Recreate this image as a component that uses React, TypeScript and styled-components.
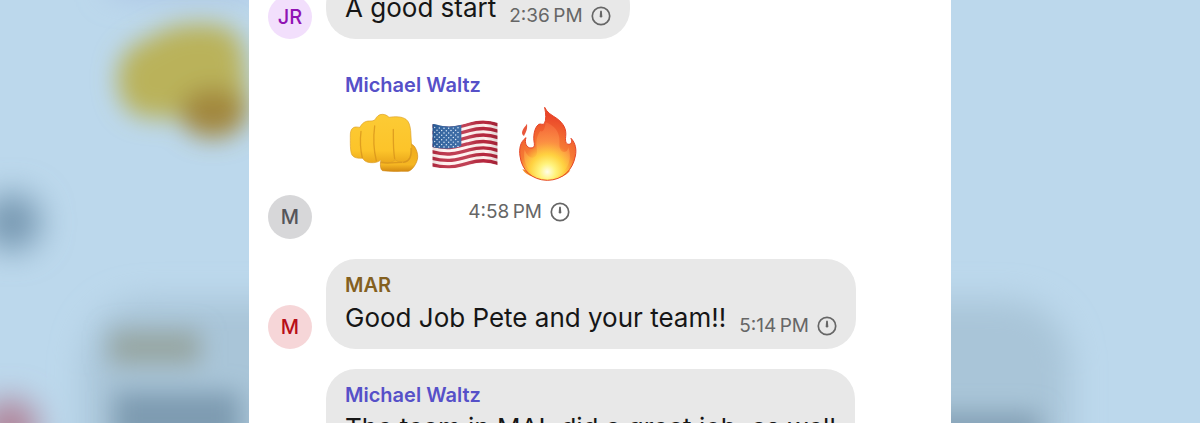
import React from "react";
import styled, { createGlobalStyle } from "styled-components";

const GlobalStyle = createGlobalStyle`
  * { box-sizing: border-box; }
  body {
    margin: 0;
    font-family: Inter, "Liberation Sans", sans-serif;
    background: #bcd8ec;
  }
`;

const Page = styled.div`
  position: relative;
  display: grid;
  grid-template-columns: minmax(0, 1fr) minmax(0, 702px) minmax(0, 1fr);
  height: 100vh;
  overflow: hidden;
`;

const Backdrop = styled.svg`
  position: absolute;
  inset: 0;
  width: 100%;
  height: 100%;
`;

const Conversation = styled.main`
  position: relative;
  grid-column: 2;
  overflow: hidden;
  background: #fff;
`;

/* The thread is scrolled a little way into its first message. */
const Thread = styled.ol`
  display: flex;
  flex-direction: column;
  gap: 20px;
  margin: -25px 0 0;
  padding: 0 19px;
  list-style: none;
`;

const Row = styled.li`
  display: flex;
  align-items: flex-end;
  gap: 14px;
`;

const Avatar = styled.div<{ $tint: string; $ink: string }>`
  flex: none;
  display: grid;
  place-items: center;
  width: 44px;
  height: 44px;
  border-radius: 50%;
  background: ${(p) => p.$tint};
  color: ${(p) => p.$ink};
  font-size: 20px;
  font-weight: 500;
`;

const AvatarSpace = styled.div`
  flex: none;
  width: 44px;
`;

const Bubble = styled.article<{ $plain?: boolean }>`
  padding: 14px 19px 13px;
  border-radius: 30px;
  background: ${(p) => (p.$plain ? "transparent" : "#e8e8e8")};
`;

const Author = styled.h2<{ $color: string }>`
  margin: 0 0 2px;
  color: ${(p) => p.$color};
  font-size: 20px;
  font-weight: 600;
  line-height: 24px;
`;

const Body = styled.div`
  display: flex;
  align-items: flex-end;
  gap: 13px;
`;

const Text = styled.p`
  margin: 0;
  color: #161616;
  font-size: 26px;
  line-height: 37px;
  white-space: nowrap;
`;

const Meta = styled.div`
  display: flex;
  align-items: center;
  justify-content: flex-end;
  gap: 8px;
  color: #666;
  font-size: 19px;
  line-height: 20px;
  white-space: nowrap;
`;

const Reactions = styled.div`
  display: flex;
  gap: 6px;
  padding: 7px 0 20px;
`;

const EmojiMessage = styled.div`
  padding-bottom: 4px;

  ${Meta} {
    padding-right: 15px;
  }
`;

const Emoji = styled.svg`
  display: block;
  width: 76px;
  height: 76px;
`;

const ClockIcon = () => (
  <svg width="20" height="20" viewBox="0 0 20 20" aria-hidden="true">
    <circle cx="10" cy="10" r="8.7" fill="none" stroke="currentColor" strokeWidth="1.7" />
    <path d="M9.2 4.8h1.6l.5 5.4a1.3 1.3 0 1 1-2.6 0z" fill="currentColor" />
  </svg>
);

const Stamp = ({ time }: { time: string }) => (
  <Meta>
    <time>{time}</time>
    <ClockIcon />
  </Meta>
);

const Fist = () => (
  <Emoji viewBox="18 18 228 228" role="img" aria-label="Fist">
    <defs>
      <linearGradient id="skin" x1="0" y1="0" x2="0" y2="1">
        <stop offset="0" stopColor="#fccb35" />
        <stop offset="0.75" stopColor="#fcc42a" />
        <stop offset="1" stopColor="#eba81c" />
      </linearGradient>
      <linearGradient id="thumb" x1="0" y1="0" x2="0" y2="1">
        <stop offset="0" stopColor="#efaa1d" />
        <stop offset="0.75" stopColor="#f5b622" />
        <stop offset="1" stopColor="#d48a12" />
      </linearGradient>
    </defs>
    <path
      d="M125 184c-2 14 0 26 6 28 20 3 54 2 76 2 12-3 21-17 26-29 4-10 4-19 1-29-3-11-8-20-17-24z"
      fill="url(#thumb)" stroke="#d28a18" strokeWidth="2"
    />
    <path
      d="M34 105c0-16 7-24 17-24 5 0 9 1 12 1 5-11 14-19 28-19 8 0 13 0 18-5 4-9 11-15 21-15 9 0 15 4 20 9 17-3 39-3 51 6 9 7 12 18 14 34l3 51c1 25-4 41-23 43-12 1-20-2-27-7-4 6-11 9-21 9-11 0-19-2-23-7-6 5-16 8-29 7-13-1-20-5-24-14-13 2-26 0-32-9-6-10-5-39-5-60z"
      fill="url(#skin)" stroke="#dca028" strokeWidth="2"
    />
    <g fill="none" stroke="#d6921b" strokeWidth="4" strokeLinecap="round" opacity=".75">
      <path d="M66 94c-3 24-2 54 4 80" />
      <path d="M107 78c-4 31-3 72 5 104" />
      <path d="M163 88c0 30-1 60 4 88" />
      <path d="M216 145c1 26-4 38-22 42" />
      <path d="M128 188c24 4 46-2 60-1" />
    </g>
  </Emoji>
);

const stripeCount = 13;
const flagTop = 70;
const flagHeight = 118;
const stripeHeight = flagHeight / stripeCount;

const Flag = () => (
  <Emoji viewBox="6 18 228 228" role="img" aria-label="Flag of the United States">
    <defs>
      <clipPath id="banner">
        <path d="M22 73Q24 71 31 73C76 87 106 76 136 67C168 57 193 61 218 68V196C178 185 155 189 125 198C86 209 54 206 22 202Z" />
      </clipPath>
      <linearGradient id="fold" x1="0" x2="1">
        <stop offset="0" stopColor="#000" stopOpacity=".1" />
        <stop offset=".2" stopColor="#fff" stopOpacity=".08" />
        <stop offset=".55" stopColor="#fff" stopOpacity=".12" />
        <stop offset=".8" stopColor="#000" stopOpacity="0" />
        <stop offset="1" stopColor="#000" stopOpacity=".16" />
      </linearGradient>
    </defs>
    <g clipPath="url(#banner)">
      <path d="M15 50H225V215H15Z" fill="#fff0ee" />
      {Array.from({ length: 7 }, (_, i) => {
        const y = flagTop + i * 2 * (stripeHeight + 0.6) + stripeHeight / 2;
        return (
          <path
            key={i}
            d={`M20 ${y + 3}C70 ${y + 17} 100 ${y + 7} 132 ${y - 2}S194 ${y - 10} 220 ${y}`}
            fill="none" stroke="#b8283f" strokeWidth={stripeHeight + 1}
          />
        );
      })}
      <path d="M20 60H109V138C80 149 50 147 20 141Z" fill="#285c9b" />
      {Array.from({ length: 9 }, (_, row) =>
        Array.from({ length: row % 2 ? 5 : 6 }, (_, col) => {
          const x = 29 + col * 14 + (row % 2 ? 7 : 0);
          return (
            <circle
              key={`${row}-${col}`}
              cx={x}
              cy={82 + row * 7 + 3 * Math.sin((x - 22) / 28)}
              r="2.2" fill="#dceafa"
            />
          );
        })
      )}
      <path d="M15 50H225V215H15Z" fill="url(#fold)" />
    </g>
  </Emoji>
);

const Fire = () => (
  <Emoji viewBox="12 18 228 228" role="img" aria-label="Fire">
    <defs>
      <radialGradient id="flame" gradientUnits="userSpaceOnUse" cx="127" cy="214" r="168">
        <stop offset="0" stopColor="#fffbd6" />
        <stop offset=".15" stopColor="#fff06a" />
        <stop offset=".32" stopColor="#ffc83d" />
        <stop offset=".5" stopColor="#f67a34" />
        <stop offset="1" stopColor="#ea4529" />
      </radialGradient>
      <radialGradient id="core" gradientUnits="userSpaceOnUse" cx="127" cy="216" r="150">
        <stop offset="0" stopColor="#fffef0" />
        <stop offset=".16" stopColor="#fff584" />
        <stop offset=".35" stopColor="#ffd441" />
        <stop offset=".62" stopColor="#fd9448" />
        <stop offset="1" stopColor="#f5663c" />
      </radialGradient>
    </defs>
    <path d="M52 207c14 4 25 14 41 25-18-3-33-11-41-25zM196 210c-8 14-23 21-38 24 14-9 24-20 38-24z" fill="#f28b26" />
    <path
      d="M119 22c7 16 21 23 36 33 20 15 30 31 27 55-2 16 2 23 10 23 7-1 10-8 6-18 14 14 17 35 13 53-8 42-37 72-84 73-47-1-77-31-82-73-3-21 0-42 18-55-5 15 1 31 15 31 9 0 11-5 10-14-4-19-1-46 13-57 7-3 12 3 17-2 6-11 5-29 1-49z"
      fill="url(#flame)" stroke="#e64628" strokeWidth="3" strokeLinejoin="round"
    />
    <path
      d="M122 66c21 9 35 22 39 39 5 17 0 31 5 43 4 8 11 10 18 6 4-3 6-8 6-12 8 22 6 47-8 65-12 17-30 29-55 30-27-1-51-15-61-37-8-17-11-36-7-51 7 18 18 27 28 23 9-4 10-16 8-29-3-21 2-39 11-50 6 5 14-3 16-27z"
      fill="url(#core)" opacity=".75"
    />
    <path d="M66 71c2 17-3 24-9 37-6-4-7-8-5-15 3-10 9-13 14-22z" fill="#e9573b" />
  </Emoji>
);

const BlurredBackdrop = () => (
  <Backdrop viewBox="0 0 1200 423" preserveAspectRatio="xMidYMin slice" aria-hidden="true">
    <defs>
      <filter id="soft" x="-50%" y="-50%" width="200%" height="200%">
        <feGaussianBlur stdDeviation="16" />
      </filter>
      <filter id="softer" x="-50%" y="-50%" width="200%" height="200%">
        <feGaussianBlur stdDeviation="12" />
      </filter>
    </defs>
    <rect width="1200" height="423" fill="#bcd8ec" />
    <g filter="url(#soft)">
      <rect x="84" y="300" width="986" height="240" rx="62" fill="#a9c5d8" />
      <rect x="110" y="-30" width="150" height="22" fill="#a4bbe2" />
      <circle cx="12" cy="222" r="29" fill="#7697b0" />
      <circle cx="10" cy="427" r="28" fill="#b07f94" />
    </g>
    <g filter="url(#softer)">
      <path d="M118 84C116 58 128 46 150 38C168 26 186 23 206 24C230 24 242 34 244 56L250 118H150C130 116 119 104 118 84Z" fill="#bab25a" />
      <ellipse cx="213" cy="113" rx="33" ry="25" fill="#a2873c" />
      <rect x="110" y="331" width="90" height="33" fill="#96a5a1" />
      <rect x="114" y="392" width="126" height="52" fill="#7e9bb1" />
      <rect x="920" y="412" width="120" height="34" fill="#84a0b5" />
    </g>
  </Backdrop>
);

export default function App() {
  return (
    <>
      <GlobalStyle />
      <Page>
        <BlurredBackdrop />
        <Conversation>
          <Thread>
            <Row>
              <Avatar $tint="#f2dffc" $ink="#9013b4">JR</Avatar>
              <Bubble>
                <Body>
                  <Text>A good start</Text>
                  <Stamp time={"2:36\u2009PM"} />
                </Body>
              </Bubble>
            </Row>
            <Row>
              <Avatar $tint="#d7d7d9" $ink="#55555a">M</Avatar>
              <Bubble $plain>
                <Author $color="#5650c8">Michael Waltz</Author>
                <EmojiMessage>
                  <Reactions>
                    <Fist />
                    <Flag />
                    <Fire />
                  </Reactions>
                  <Stamp time={"4:58\u2009PM"} />
                </EmojiMessage>
              </Bubble>
            </Row>
            <Row>
              <Avatar $tint="#f6d6d8" $ink="#b80f18">M</Avatar>
              <Bubble>
                <Author $color="#84601f">MAR</Author>
                <Body>
                  <Text>Good Job Pete and your team!!</Text>
                  <Stamp time={"5:14\u2009PM"} />
                </Body>
              </Bubble>
            </Row>
            <Row>
              <AvatarSpace />
              <Bubble>
                <Author $color="#5650c8">Michael Waltz</Author>
                <Text>The team in MAL did a great job, as well</Text>
              </Bubble>
            </Row>
          </Thread>
        </Conversation>
      </Page>
    </>
  );
}
